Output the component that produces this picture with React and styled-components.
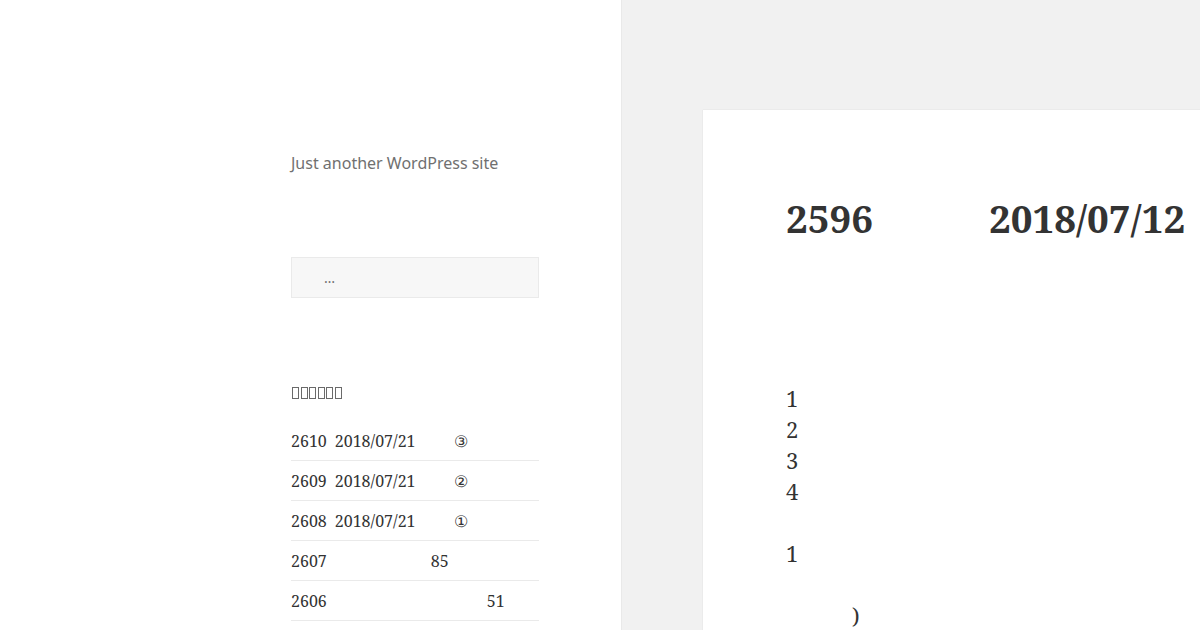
import React from 'react'
import styled, { createGlobalStyle } from 'styled-components'

const GlobalStyle = createGlobalStyle`
  html, body {
    margin: 0;
    padding: 0;
    width: 1200px;
    height: 630px;
    overflow: hidden;
    background: #f1f1f1;
  }
  * { box-sizing: border-box; }
`

const recentPosts = [
  { parts: ['2610', 8, '2018/07/21', 38, '③'] },
  { parts: ['2609', 8, '2018/07/21', 38, '②'] },
  { parts: ['2608', 8, '2018/07/21', 38, '①'] },
  { parts: ['2607', 104, '85'] },
  { parts: ['2606', 160, '51'] },
]

const bodyLines = [
  ['1'],
  ['2'],
  ['3'],
  ['4'],
  [],
  ['1'],
  [],
  [66, ')'],
]

function Line({ parts }) {
  return parts.map((p, i) =>
    typeof p === 'number' ? <Blank key={i} $w={p} /> : <span key={i}>{p}</span>
  )
}

export default function App() {
  return (
    <>
      <GlobalStyle />
      <Page>
        <Sidebar>
          <SiteDescription>Just another WordPress site</SiteDescription>
          <SearchField>
            <SearchPlaceholder>…</SearchPlaceholder>
          </SearchField>
          <WidgetTitle>
            {Array.from({ length: 6 }).map((_, i) => <Tofu key={i} />)}
          </WidgetTitle>
          <PostList>
            {recentPosts.map((post, index) => (
              <PostItem key={index}>
                <Line parts={post.parts} />
              </PostItem>
            ))}
          </PostList>
        </Sidebar>
        <Main>
          <Article>
            <EntryTitle>
              <span>2596</span>
              <Blank $w={116} />
              <span>2018/07/12</span>
            </EntryTitle>
            <EntryContent>
              {bodyLines.map((parts, index) => (
                <BodyLine key={index}>
                  <Line parts={parts} />
                </BodyLine>
              ))}
            </EntryContent>
          </Article>
        </Main>
      </Page>
    </>
  )
}

const Page = styled.div`
  display: flex;
  width: 1200px;
  height: 630px;
  overflow: hidden;
`

const Sidebar = styled.aside`
  flex: 0 0 621px;
  background: #fff;
  box-shadow: 0 0 1px rgba(0, 0, 0, 0.2);
  padding: 152px 82px 0 291px;
  display: flex;
  flex-direction: column;
  position: relative;
  z-index: 1;
`

const SiteDescription = styled.p`
  margin: 0;
  font-family: "Noto Sans", sans-serif;
  font-size: 16px;
  line-height: 22px;
  color: #707070;
`

const SearchField = styled.div`
  margin-top: 83px;
  width: 248px;
  height: 41px;
  background: #f7f7f7;
  border: 1px solid #eaeaea;
  display: flex;
  align-items: center;
  padding-left: 32px;
`

const SearchPlaceholder = styled.span`
  font-family: "Noto Sans", sans-serif;
  font-size: 14px;
  color: #707070;
`

const WidgetTitle = styled.h2`
  margin: 88px 0 0;
  height: 14px;
  display: flex;
  gap: 1.5px;
  align-items: center;
  padding-left: 1px;
`

const Tofu = styled.span`
  display: inline-block;
  width: 7px;
  height: 12px;
  border: 1px solid #6a6a6a;
`

const PostList = styled.ul`
  list-style: none;
  margin: 21px 0 0;
  padding: 0;
  width: 248px;
  font-family: "Noto Serif", "DejaVu Serif", serif;
  font-size: 16px;
  color: #333;
`

const PostItem = styled.li`
  display: flex;
  align-items: center;
  height: 40px;
  border-bottom: 1px solid #eaeaea;
  white-space: pre;
  padding-top: 1px;
`

const Blank = styled.span`
  display: inline-block;
  width: ${(p) => p.$w}px;
`

const Main = styled.main`
  flex: 1;
  background: #f1f1f1;
  padding: 110px 0 0 82px;
  overflow: hidden;
`

const Article = styled.article`
  width: 800px;
  min-height: 600px;
  background: #fff;
  box-shadow: 0 0 1px rgba(0, 0, 0, 0.15);
  padding: 80px 0 0 83px;
`

const EntryTitle = styled.h1`
  margin: 0;
  display: flex;
  align-items: center;
  height: 56px;
  font-family: "Noto Serif", "DejaVu Serif", serif;
  font-weight: 700;
  font-size: 38.5px;
  color: #333;
  white-space: nowrap;
`

const EntryContent = styled.div`
  margin-top: 136px;
  font-family: "Noto Serif", "DejaVu Serif", serif;
  font-size: 22px;
  color: #333;
`

const BodyLine = styled.div`
  display: flex;
  align-items: center;
  height: 31px;
  white-space: pre;
`
